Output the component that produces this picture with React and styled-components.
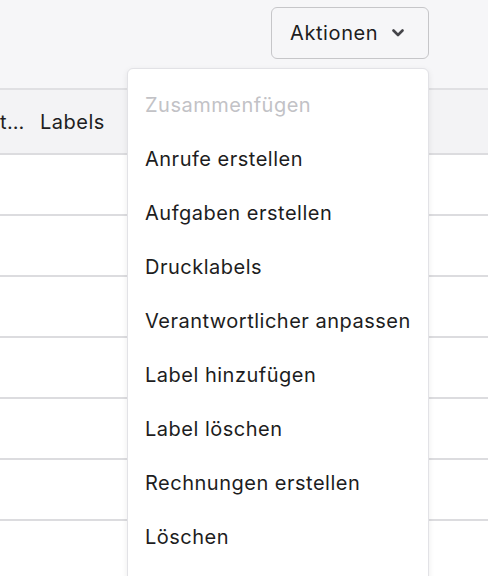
import React from "react";
import styled, { createGlobalStyle } from "styled-components";

const GlobalStyle = createGlobalStyle`
  html, body {
    margin: 0;
    padding: 0;
    background: #f6f6f8;
    font-family: Inter, "Noto Sans", sans-serif;
    color: #1d1d21;
  }
`;

const actions = [
  { label: "Zusammenfügen", disabled: true },
  { label: "Anrufe erstellen" },
  { label: "Aufgaben erstellen" },
  { label: "Drucklabels" },
  { label: "Verantwortlicher anpassen" },
  { label: "Label hinzufügen" },
  { label: "Label löschen" },
  { label: "Rechnungen erstellen" },
  { label: "Löschen" },
];

const App = () => {
  return (
    <>
      <GlobalStyle />
      <Page>
        <Toolbar>
          <ActionWrapper>
            <ActionButton type="button">
              Aktionen
              <Chevron viewBox="0 0 12 8">
                <path
                  d="M1.5 1.5 L6 6 L10.5 1.5"
                  fill="none"
                  stroke="currentColor"
                  strokeWidth="2.6"
                  strokeLinecap="round"
                  strokeLinejoin="round"
                />
              </Chevron>
            </ActionButton>
            <Menu>
              {actions.map((a) => (
                <MenuItem key={a.label} disabled={a.disabled}>
                  {a.label}
                </MenuItem>
              ))}
            </Menu>
          </ActionWrapper>
        </Toolbar>
        <Table>
          <HeaderRow>
            <HeaderCell width="40px">t…</HeaderCell>
            <HeaderCell>Labels</HeaderCell>
          </HeaderRow>
          {[0, 1, 2, 3, 4, 5, 6].map((i) => (
            <Row key={i} />
          ))}
        </Table>
      </Page>
    </>
  );
};

const Page = styled.div`
  width: 488px;
  height: 576px;
  overflow: hidden;
  display: flex;
  flex-direction: column;
`;

const Toolbar = styled.div`
  display: flex;
  justify-content: flex-end;
  padding: 7px 59px 0 0;
  height: 88px;
  flex-shrink: 0;
  box-sizing: border-box;
`;

const ActionWrapper = styled.div`
  position: relative;
`;

const ActionButton = styled.button`
  display: flex;
  align-items: center;
  gap: 14px;
  height: 52px;
  width: 158px;
  box-sizing: border-box;
  padding: 0 0 0 18px;
  border: 1.5px solid #c6c6c9;
  border-radius: 6px;
  background: #f6f6f8;
  font-family: Inter, "Noto Sans", sans-serif;
  font-size: 20px;
  letter-spacing: 0.6px;
  color: #1d1d21;
  cursor: pointer;
`;

const Chevron = styled.svg`
  width: 12px;
  height: 8px;
  color: #45454a;
`;

const Menu = styled.div`
  position: absolute;
  top: 61px;
  right: 0;
  width: 302px;
  height: 540px;
  box-sizing: border-box;
  padding: 9px 0;
  background: #ffffff;
  border: 1px solid #e2e2e6;
  border-radius: 6px;
  box-shadow: 0 2px 6px rgba(0, 0, 0, 0.08);
  z-index: 10;
  display: flex;
  flex-direction: column;
`;

const MenuItem = styled.div`
  height: 54px;
  flex-shrink: 0;
  display: flex;
  align-items: center;
  padding: 0 17px;
  font-size: 20px;
  letter-spacing: 0.5px;
  color: ${({ disabled }) => (disabled ? "#c2c2c6" : "#1d1d21")};
  cursor: ${({ disabled }) => (disabled ? "default" : "pointer")};
`;

const Table = styled.div`
  display: flex;
  flex-direction: column;
  border-top: 2px solid #e0e0e3;
`;

const HeaderRow = styled.div`
  display: flex;
  align-items: center;
  height: 63px;
  flex-shrink: 0;
  background: #f3f3f5;
  border-bottom: 2px solid #dcdcdf;
`;

const HeaderCell = styled.div`
  width: ${({ width }) => width || "auto"};
  font-size: 20px;
  letter-spacing: 0.5px;
  color: #1d1d21;
  white-space: nowrap;
`;

const Row = styled.div`
  height: 59px;
  flex-shrink: 0;
  background: #ffffff;
  border-bottom: 2px solid #dcdcdf;
`;

export default App;
